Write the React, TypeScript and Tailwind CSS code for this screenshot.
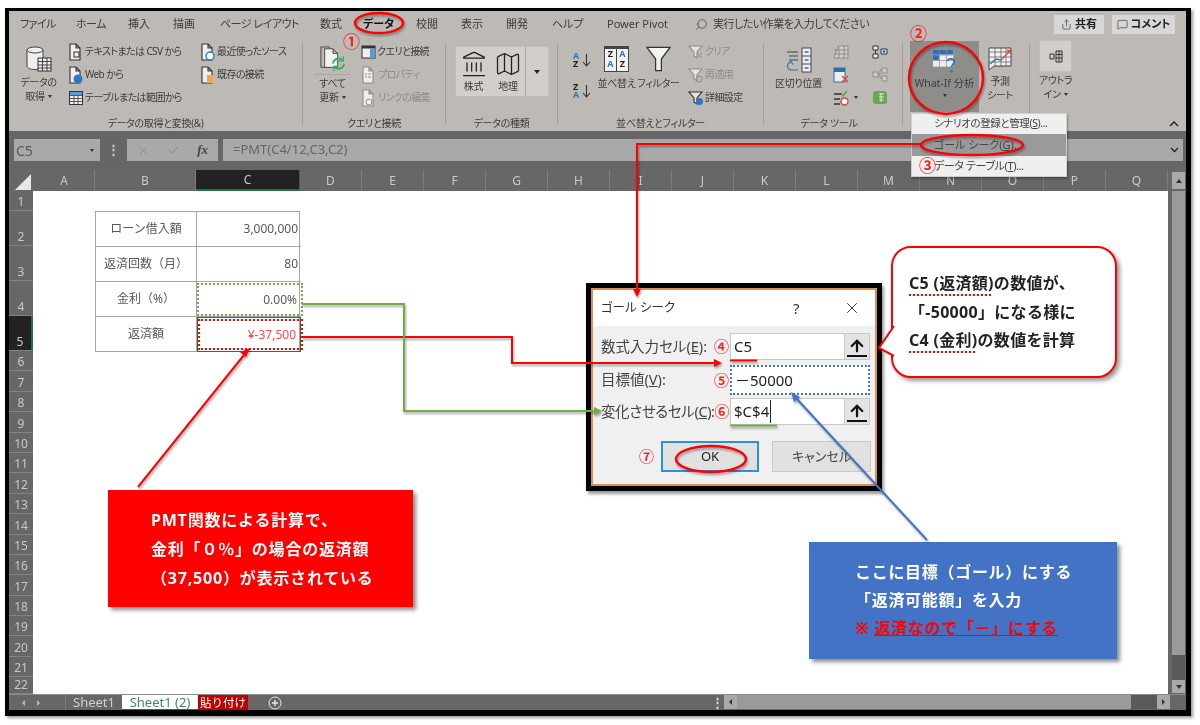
import type { ReactNode } from "react";
import { ArrowUp, Check, Landmark, Map as MapIcon, MessageSquare, Search, Share, X } from "lucide-react";

// small page shape shared by the data source icons
function Page({ children, muted }: { children?: ReactNode; muted?: boolean }) {
  const c = muted ? "#8f8c89" : "#333";
  return (
    <svg width="16" height="18" viewBox="0 0 16 18" className="shrink-0">
      <path d="M2 1h6l4 4v12H2z M8 1v4h4" fill="#efefef" stroke={c} strokeWidth="1.1" />
      {children}
    </svg>
  );
}

function TableGlyph({ size = 16 }: { size?: number }) {
  return (
    <svg width={size} height={size} viewBox="0 0 16 16" className="shrink-0">
      <rect x="1.5" y="1.5" width="13" height="13" fill="#efefef" stroke="#333" />
      <rect x="2" y="2" width="12" height="3" fill="#5b9bd5" />
      <path d="M1.5 5.5h13M1.5 8.5h13M1.5 11.5h13M6 5.5v9M10 5.5v9" stroke="#333" strokeWidth="0.8" />
    </svg>
  );
}

function DataIcon() {
  return (
    <svg width="28" height="27" viewBox="0 0 28 27">
      <path d="M2 4v16c0 2 3 3.500 8 3.500s8-1.500 8-3.500V4" fill="#efefef" stroke="#444" />
      <ellipse cx="10" cy="4" rx="8" ry="3" fill="#efefef" stroke="#444" />
      <rect x="13" y="12" width="13" height="13" fill="#efefef" stroke="#333" />
      <path d="M13 15.500h13M13 19h13M13 22h13M17.500 12v13M22 12v13" stroke="#333" strokeWidth="0.9" />
    </svg>
  );
}

function RefreshIcon() {
  return (
    <svg width="28" height="26" viewBox="0 0 30 28">
      <path d="M2 1h9v22H2z" fill="#bdb9b5" stroke="#444" />
      <path d="M6 3h9l5 5v15H6z M15 3v5h5" fill="#f2f2f2" stroke="#444" />
      <path d="M15 19a6 6 0 0 1 10-4M27 19a6 6 0 0 1-10 4" fill="none" stroke="#3fa95c" strokeWidth="1.8" />
      <path d="M26 11v5h-5M16 27v-5h5" fill="none" stroke="#3fa95c" strokeWidth="1.4" />
    </svg>
  );
}

function PaneIcon() {
  return (
    <svg width="15" height="14" viewBox="0 0 15 14" className="shrink-0">
      <rect x="1" y="1" width="13" height="12" fill="#efefef" stroke="#333" />
      <rect x="1" y="1" width="13" height="2.500" fill="#333" />
      <rect x="9" y="3.500" width="4.500" height="9" fill="#5b9bd5" />
    </svg>
  );
}

function FunnelGlyph({ color, children }: { color: string; children?: ReactNode }) {
  return (
    <svg width="16" height="16" viewBox="0 0 16 16" className="shrink-0">
      <path d="M1 2h13L9 8v6l-3-2V8z" fill="#e4e1de" stroke={color} strokeWidth="1.1" />
      {children}
    </svg>
  );
}

function SortLetters({ top, bottom }: { top: string; bottom: string }) {
  const topColor = top === "A" ? "text-[#2f77c4]" : "text-[#222]";
  const bottomColor = bottom === "A" ? "text-[#2f77c4]" : "text-[#222]";
  return (
    <div className="flex items-center h-[20px]">
      <div className="flex flex-col text-[9px] leading-[8px] font-bold w-[9px]">
        <span className={topColor}>{top}</span>
        <span className={bottomColor}>{bottom}</span>
      </div>
      <svg width="9" height="16" viewBox="0 0 9 16">
        <path d="M4.500 2v12M1 10l3.500 4 3.500-4" fill="none" stroke="#333" strokeWidth="1.1" />
      </svg>
    </div>
  );
}

function SortGrid() {
  return (
    <div className="w-[25px] h-[26px] border border-[#444] border-t-[3px] bg-[#f2f2f2] grid grid-cols-2 text-[9px] leading-[10px] font-bold text-center tracking-normal">
      <div className="border-r border-[#444] flex flex-col text-[#222]">
        <span>Z</span>
        <span className="text-[#2f77c4]">A</span>
      </div>
      <div className="flex flex-col text-[#2f77c4]">
        <span>A</span>
        <span className="text-[#222]">Z</span>
      </div>
    </div>
  );
}

function SplitIcon() {
  return (
    <svg width="26" height="26" viewBox="0 0 26 26">
      <path d="M1 5h11M3 9h9M3 13h9" stroke="#444" strokeWidth="1.2" />
      <rect x="16" y="1" width="9" height="24" fill="#efefef" stroke="#444" />
      <path d="M16 9h9M16 17h9" stroke="#444" />
      <path d="M18.500 5h4M18.500 13h4M18.500 21h4" stroke="#2f77c4" strokeWidth="1.6" />
      <path d="M12 23H6a4 4 0 0 1-1-8M2 17l3-2.500 2 3" fill="none" stroke="#2f77c4" strokeWidth="1.2" />
    </svg>
  );
}

function WhatIfIcon() {
  return (
    <svg width="28" height="26" viewBox="0 0 28 28">
      <rect x="1" y="1" width="22" height="18" fill="#eee" />
      <rect x="1" y="1" width="22" height="5" fill="#2f6fb5" />
      <rect x="1" y="6" width="6.500" height="6" fill="#2f6fb5" />
      <path d="M1 6.500h22M1 12.500h22M8 1v18M15.500 1v18" stroke="#8f8d8a" strokeWidth="0.8" />
      <path d="M17 13c0-3 7-3.500 7 .5 0 3-3 3-3 6.500" fill="none" stroke="#2f77c4" strokeWidth="2" />
      <circle cx="21" cy="24" r="1.500" fill="#2f77c4" />
    </svg>
  );
}

function ForecastIcon() {
  return (
    <svg width="24" height="24" viewBox="0 0 24 24">
      <path d="M1 1h22v18H6l-5 4z" fill="#f2f2f2" stroke="#444" />
      <path d="M1 5h22M1 10h22M1 15h22M7 1v18M13 1v18M18 1v18" stroke="#555" strokeWidth="0.7" />
      <path d="M2 17l6-5 5 1" fill="none" stroke="#2f77c4" strokeWidth="1.4" />
      <path d="M13 13l9-9M19 3.500h3.500V7" fill="none" stroke="#e0403a" strokeWidth="1.3" />
    </svg>
  );
}

function RibbonLabel({ children, muted }: { children: ReactNode; muted?: boolean }) {
  return <span className={muted ? "text-[#8f8c89] whitespace-nowrap tracking-[-0.6px]" : "whitespace-nowrap tracking-[-0.6px]"}>{children}</span>;
}

function SmallItem({ icon, text, muted }: { icon: ReactNode; text: string; muted?: boolean }) {
  return (
    <div className="h-[23px] flex items-center gap-[1px]">
      {icon}
      <RibbonLabel muted={muted}>{text}</RibbonLabel>
    </div>
  );
}

function GroupLabel({ children, className }: { children: ReactNode; className: string }) {
  return <div className={`h-[16px] pt-[1px] flex items-center justify-center ${className}`}>{children}</div>;
}

function Divider() {
  return <div className="w-px bg-[#a09c98] my-[6px] shrink-0" />;
}

function Caret({ className = "" }: { className?: string }) {
  return <span className={`inline-block w-0 h-0 border-x-[2.5px] border-x-transparent border-t-[3px] border-t-[#333] ${className}`} />;
}

function Ribbon() {
  return (
    <div className="h-[93px] flex bg-[#bdb9b5] text-[10px] tracking-[-0.3px] text-[#3d3d3d] [font-feature-settings:'palt']">
      {/* データの取得と変換 */}
      <div className="w-[293px] flex flex-col">
        <div className="h-[77px] flex pl-[11px] pt-[2px]">
          <div className="w-[37px] flex flex-col items-center pt-[6px]">
            <DataIcon />
            <div className="leading-[14px] mt-[2px] text-center whitespace-nowrap">データの</div>
            <div className="leading-[14px] flex items-center gap-[3px]">取得 <Caret /></div>
          </div>
          <div className="w-[132px] ml-[11px] flex flex-col">
            <SmallItem text="テキストまたは CSV から" icon={<Page><rect x="6" y="9" width="5" height="5" fill="none" stroke="#333" /></Page>} />
            <SmallItem text="Web から" icon={<Page><circle cx="10" cy="13" r="4.500" fill="#2f77c4" /></Page>} />
            <SmallItem text="テーブルまたは範囲から" icon={<TableGlyph />} />
          </div>
          <div className="flex flex-col">
            <SmallItem text="最近使ったソース" icon={<Page><circle cx="10" cy="13" r="4" fill="#fff" stroke="#2f77c4" strokeWidth="1.4" /></Page>} />
            <SmallItem text="既存の接続" icon={<Page><rect x="7" y="9" width="6" height="8" fill="#f2a649" /></Page>} />
          </div>
        </div>
        <GroupLabel className="">データの取得と変換(&amp;)</GroupLabel>
      </div>
      <Divider />
      {/* クエリと接続 */}
      <div className="w-[142px] flex flex-col">
        <div className="h-[77px] flex pl-[11px] pt-[2px]">
          <div className="w-[37px] flex flex-col items-center pt-[6px]">
            <RefreshIcon />
            <div className="w-full h-px bg-[#a9a5a1] mt-[2px]" />
            <div className="leading-[14px] mt-[1px]">すべて</div>
            <div className="leading-[14px] flex items-center gap-[3px] whitespace-nowrap">更新 <Caret /></div>
          </div>
          <div className="ml-[10px] flex flex-col">
            <SmallItem text="クエリと接続" icon={<PaneIcon />} />
            <SmallItem text="プロパティ" muted icon={<Page muted><path d="M4 8h2M4 11h2M7 8h3M7 11h3" stroke="#8f8c89" /></Page>} />
            <SmallItem text="リンクの編集" muted icon={<Page muted><circle cx="8" cy="13" r="3" fill="none" stroke="#8f8c89" /></Page>} />
          </div>
        </div>
        <GroupLabel className="">クエリと接続</GroupLabel>
      </div>
      <Divider />
      {/* データの種類 */}
      <div className="w-[111px] flex flex-col">
        <div className="h-[77px] pl-[9px] pt-[8px]">
          <div className="w-[94px] h-[51px] flex bg-[#d2ceca] border border-[#c2beba]">
            <div className="w-[69px] flex pt-[3px]">
              <div className="w-[35px] flex flex-col items-center">
                <Landmark size={28} strokeWidth={1.1} color="#222" />
                <span className="leading-[13px] mt-[2px]">株式</span>
              </div>
              <div className="w-[34px] flex flex-col items-center">
                <MapIcon size={28} strokeWidth={1.1} color="#222" />
                <span className="leading-[13px] mt-[2px]">地理</span>
              </div>
            </div>
            <div className="flex-1 border-l border-[#a9a5a1] flex items-center justify-center">
              <span className="w-0 h-0 border-x-[3.5px] border-x-transparent border-t-[4px] border-t-[#222]" />
            </div>
          </div>
        </div>
        <GroupLabel className="">データの種類</GroupLabel>
      </div>
      <Divider />
      {/* 並べ替えとフィルター */}
      <div className="w-[205px] flex flex-col">
        <div className="h-[77px] flex pl-[15px] pt-[2px]">
          <div className="w-[22px] flex flex-col pt-[10px] gap-[11px]">
            <SortLetters top="A" bottom="Z" />
            <SortLetters top="Z" bottom="A" />
          </div>
          <div className="w-[43px] flex flex-col items-center pt-[6px]">
            <SortGrid />
            <span className="leading-[14px] mt-[4px] whitespace-nowrap">並べ替え</span>
          </div>
          <div className="w-[43px] ml-[-1px] flex flex-col items-center pt-[6px]">
            <svg width="25" height="26" viewBox="0 0 26 26">
              <path d="M1 1h24L16 13v12h-6V13z" fill="#f2f2f2" stroke="#333" strokeWidth="1.3" />
            </svg>
            <span className="leading-[14px] mt-[4px] whitespace-nowrap">フィルター</span>
          </div>
          <div className="ml-[8px] flex flex-col">
            <SmallItem muted text="クリア" icon={<FunnelGlyph color="#8f8c89"><path d="M9 9l5 5M14 9l-5 5" stroke="#8f8c89" /></FunnelGlyph>} />
            <SmallItem muted text="再適用" icon={<FunnelGlyph color="#8f8c89"><circle cx="11" cy="12" r="3" fill="none" stroke="#8f8c89" /></FunnelGlyph>} />
            <SmallItem text="詳細設定" icon={<FunnelGlyph color="#333"><circle cx="11.500" cy="11.500" r="3.500" fill="#2f77c4" /></FunnelGlyph>} />
          </div>
        </div>
        <GroupLabel className="">並べ替えとフィルター</GroupLabel>
      </div>
      <Divider />
      {/* データ ツール */}
      <div className="w-[138px] flex flex-col">
        <div className="h-[77px] flex pl-[11px] pt-[2px]">
          <div className="w-[47px] flex flex-col items-center pt-[7px]">
            <SplitIcon />
            <span className="leading-[14px] mt-[3px] whitespace-nowrap">区切り位置</span>
          </div>
          <div className="ml-[11px] w-[39px] flex flex-col">
            <div className="h-[23px] flex items-center">
              <svg width="16" height="16" viewBox="0 0 16 16"><path d="M1 14L5 2h10v12z M1 10h14M1 6h14M6 2v12M11 2v12" fill="#cfcbc7" stroke="#8f8c89" /></svg>
            </div>
            <div className="h-[23px] flex items-center">
              <svg width="16" height="16" viewBox="0 0 16 16">
                <rect x="1" y="1" width="11" height="14" fill="#efefef" stroke="#2f6fb5" />
                <rect x="1" y="1" width="11" height="4" fill="#2f6fb5" />
                <path d="M9 9l6 6M15 9l-6 6" stroke="#e0403a" strokeWidth="1.4" />
              </svg>
            </div>
            <div className="h-[23px] flex items-center gap-[5px]">
              <svg width="16" height="16" viewBox="0 0 16 16">
                <path d="M1 4h8M1 9h6M1 14h6" stroke="#333" strokeWidth="1.5" />
                <path d="M8 4l2 2 4-5" fill="none" stroke="#3fa95c" strokeWidth="1.3" />
                <circle cx="11.500" cy="11.500" r="3.500" fill="#fff" stroke="#e0403a" strokeWidth="1.4" />
              </svg>
              <Caret />
            </div>
          </div>
          <div className="flex flex-col">
            <div className="h-[23px] flex items-center">
              <svg width="16" height="14" viewBox="0 0 16 14">
                <path d="M1 1h5v4H1zM1 9h5v4H1zM3.500 5v4M9 4h6v5H9z" fill="#efefef" stroke="#333" />
                <circle cx="12" cy="6.500" r="1.500" fill="#2f77c4" />
              </svg>
            </div>
            <div className="h-[23px] flex items-center">
              <svg width="16" height="15" viewBox="0 0 16 15"><path d="M1 5h5v5H1zM10 1h5v5h-5zM10 9h5v5h-5zM6 7h2V3h2M8 7v4h2" fill="#cfcbc7" stroke="#8f8c89" /></svg>
            </div>
            <div className="h-[23px] flex items-center">
              <svg width="16" height="15" viewBox="0 0 16 15">
                <rect x="1" y="1" width="14" height="13" rx="3" fill="#6aa84f" />
                <path d="M7 4h5M7 7h5M7 10h5M9 3v9" stroke="#d9ead3" />
              </svg>
            </div>
          </div>
        </div>
        <GroupLabel className="pr-[8px]">データ ツール</GroupLabel>
      </div>
      <Divider />
      {/* 予測 */}
      <div className="w-[126px] flex pl-[7px] pt-[3px]">
        <div className="w-[69px] h-[71px] bg-[#8f8d8a] flex flex-col items-center pt-[8px]">
          <WhatIfIcon />
          <span className="leading-[14px] mt-[1px] whitespace-nowrap text-[10.5px] tracking-normal">What-If 分析</span>
          <Caret className="mt-[4px]" />
        </div>
        <div className="w-[42px] flex flex-col items-center pt-[6px]">
          <ForecastIcon />
          <span className="leading-[14px] mt-[3px]">予測</span>
          <span className="leading-[14px]">シート</span>
        </div>
      </div>
      <Divider />
      {/* アウトライン */}
      <div className="w-[51px] flex flex-col items-center pt-[2px]">
        <div className="w-[33px] h-[32px] bg-[#d2ceca] border border-[#c2beba] flex items-center justify-center">
          <svg width="14" height="13" viewBox="0 0 14 13">
            <path d="M7 1h6v11H7zM7 4.500h6M7 8h6M10 1v11M1 4h4v5H1z" fill="none" stroke="#333" />
          </svg>
        </div>
        <span className="leading-[14px] mt-[1px] whitespace-nowrap">アウトラ</span>
        <span className="leading-[14px] flex items-center gap-[3px]">イン <Caret /></span>
      </div>
      <div className="flex-1 flex items-end justify-end pr-[7px] pb-[4px]">
        <svg width="10" height="7" viewBox="0 0 10 7"><path d="M1 6l4-4 4 4" fill="none" stroke="#222" strokeWidth="1.4" /></svg>
      </div>
    </div>
  );
}

const ribbonTabs = [
  { label: "ファイル", w: "w-[56px] tracking-[-0.6px]" },
  { label: "ホーム", w: "w-[52px] tracking-[-0.5px]" },
  { label: "挿入", w: "w-[45px]" },
  { label: "描画", w: "w-[47px]" },
  { label: "ページ レイアウト", w: "w-[100px] tracking-[-0.5px]" },
  { label: "数式", w: "w-[43px]" },
  { label: "データ", w: "w-[53px] font-bold text-[#111]" },
  { label: "校閲", w: "w-[45px]" },
  { label: "表示", w: "w-[45px]" },
  { label: "開発", w: "w-[46px]" },
  { label: "ヘルプ", w: "w-[55px]" },
  { label: "Power Pivot", w: "w-[88px]" },
];

function TabRow() {
  return (
    <div className="h-[27px] flex items-center pl-[11px] pr-[11px] bg-[#bdb9b5] text-[11px] text-[#3d3d3d] whitespace-nowrap [font-feature-settings:'palt']">
      {ribbonTabs.map((t) => (
        <div key={t.label} className={t.w}>{t.label}</div>
      ))}
      <Search size={13} strokeWidth={1.3} className="-scale-x-100" />
      <span className="ml-[5px] text-[11px] tracking-[-0.5px]">実行したい作業を入力してください</span>
      <div className="ml-auto flex gap-[8px]">
        <div className="w-[50px] h-[19px] bg-[#d7d7d7] flex items-center justify-center gap-[3px] text-[11px] font-bold text-[#222]">
          <Share size={11} strokeWidth={1.3} />共有
        </div>
        <div className="w-[63px] h-[19px] bg-[#d7d7d7] flex items-center justify-center gap-[3px] text-[11px] font-bold text-[#222]">
          <MessageSquare size={11} strokeWidth={1.3} />コメント
        </div>
      </div>
    </div>
  );
}

function FormulaBar() {
  return (
    <div className="h-[39px] flex items-start pt-[8px] pl-[5px] bg-[#666] text-[13px] text-[#595959]">
      <div className="w-[86px] h-[22px] bg-[#a9a9a9] flex items-center justify-between pl-[2px] pr-[6px]">
        <span className="text-[14px]">C5</span>
        <Caret />
      </div>
      <div className="w-[27px] text-center text-[#d0d0d0] font-bold leading-[20px]">⋮</div>
      <div className="w-[91px] h-[22px] bg-[#a9a9a9] flex items-center justify-between pl-[10px] pr-[10px]">
        <X size={13} strokeWidth={1.2} color="#808080" />
        <Check size={13} strokeWidth={1.6} color="#808080" />
        <span className="font-['Liberation_Serif',serif] italic font-bold text-[#444] text-[13px]">fx</span>
      </div>
      <div className="ml-[5px] w-[960px] h-[22px] bg-[#a9a9a9] flex items-center justify-between pl-[10px] pr-[4px]">
        <span className="text-[#666]">=PMT(C4/12,C3,C2)</span>
        <svg width="9" height="6" viewBox="0 0 9 6"><path d="M1 1l3.500 3.500L8 1" fill="none" stroke="#222" strokeWidth="1.3" /></svg>
      </div>
    </div>
  );
}

const columns = [
  { n: "A", w: "w-[61px]" },
  { n: "B", w: "w-[101px]" },
  { n: "C", w: "w-[104px] bg-[#222] border-b-2 border-[#217346]" },
  { n: "D", w: "w-[62px]" },
  { n: "E", w: "w-[62px]" },
  { n: "F", w: "w-[62px]" },
  { n: "G", w: "w-[62px]" },
  { n: "H", w: "w-[62px]" },
  { n: "I", w: "w-[62px]" },
  { n: "J", w: "w-[62px]" },
  { n: "K", w: "w-[62px]" },
  { n: "L", w: "w-[62px]" },
  { n: "M", w: "w-[62px]" },
  { n: "N", w: "w-[62px]" },
  { n: "O", w: "w-[62px]" },
  { n: "P", w: "w-[62px]" },
  { n: "Q", w: "w-[62px]" },
];

function ColumnHeader() {
  return (
    <div className="h-[21px] flex bg-[#676767] text-[12px] text-[#c9c9c9]">
      <div className="w-[25px] flex items-end justify-end pr-[3px] pb-[1px]">
        <svg width="16" height="16" viewBox="0 0 16 16"><path d="M16 0v16H0z" fill="#e8e8e8" /></svg>
      </div>
      {columns.map((c) => (
        <div key={c.n} className={`${c.w} flex items-center justify-center border-r border-[#7d7d7d]`}>{c.n}</div>
      ))}
      <div className="flex-1 pl-[4px] pt-[2px]">
        <div className="w-[13px] h-[17px] bg-[#a9a9a9] flex items-center justify-center">
          <span className="w-0 h-0 border-x-[3.5px] border-x-transparent border-b-[4px] border-b-[#333]" />
        </div>
      </div>
    </div>
  );
}

const rowNumbers = Array.from({ length: 22 }, (_, i) => i + 1);

function RowHeaders() {
  return (
    <div className="w-[24px] shrink-0 bg-[#676767] text-[12px] text-[#c9c9c9] flex flex-col overflow-hidden">
      {rowNumbers.map((n) => {
        let cls = "h-[20.4px] shrink-0";
        if (n === 1) cls = "h-[20px] shrink-0";
        if (n >= 2 && n <= 4) cls = "h-[35px] shrink-0";
        if (n === 5) cls = "h-[35px] shrink-0 bg-[#222] border-r-2 border-r-[#217346]";
        if (n === 22) cls = "h-[17px] shrink-0";
        return (
          <div key={n} className={`${cls} flex items-end justify-center border-b border-[#838383] leading-[16px]`}>{n}</div>
        );
      })}
    </div>
  );
}

function LoanTable() {
  const labelCell = "h-[35px] flex items-center justify-center border-r border-b border-[#a6a6a6]";
  const valueCell = "h-[35px] flex items-center justify-end pr-[3px] border-b border-[#a6a6a6]";
  return (
    <div className="ml-[62px] mt-[20px] w-[205px] grid grid-cols-[101px_104px] border-l border-t border-r border-[#a6a6a6] text-[12px] text-[#595959]">
      <div className={labelCell}>ローン借入額</div>
      <div className={valueCell}>3,000,000</div>
      <div className={labelCell}>返済回数（月）</div>
      <div className={valueCell}>80</div>
      <div className={labelCell}>金利（%）</div>
      <div className="h-[35px] border-b border-[#a6a6a6]">
        <div className="h-[33px] mt-[1px] mr-[-2px] flex items-center justify-end pr-[4px] border-2 border-dotted border-[#70ad47]">0.00%</div>
      </div>
      <div className={labelCell}>返済額</div>
      <div className="h-[35px] border border-[#217346]">
        <div className="h-[31px] mt-[1px] mr-[-3px] flex items-center justify-end pr-[5px] border-2 border-dotted border-[#ff0000] text-[#ff4b4b]">¥-37,500</div>
      </div>
    </div>
  );
}

function VerticalScroll() {
  return (
    <div className="flex-1 bg-[#676767] pl-[4px] flex flex-col">
      <div className="w-[13px] h-[464px] bg-[#9a9a9a]" />
      <div className="w-[13px] h-[25px] bg-[#595959]" />
      <div className="w-[13px] h-[13px] bg-[#a9a9a9] flex items-center justify-center">
        <span className="w-0 h-0 border-x-[3.5px] border-x-transparent border-t-[4px] border-t-[#333]" />
      </div>
    </div>
  );
}

function SheetTabs() {
  return (
    <div className="h-[16px] flex bg-[#676767] text-[13px] leading-[15px] border-t border-[#8a8a8a]">
      <div className="w-[57px] flex items-center pl-[13px] gap-[12px] border-r border-[#7d7d7d]">
        <span className="w-0 h-0 border-y-[3px] border-y-transparent border-r-[3px] border-r-[#bbb]" />
        <span className="w-0 h-0 border-y-[3px] border-y-transparent border-l-[3px] border-l-[#bbb]" />
      </div>
      <div className="w-[56px] text-center text-[#cfcfcf]">Sheet1</div>
      <div className="w-[76px] text-center text-[#3e8a63] bg-white border-b border-[#217346]">Sheet1 (2)</div>
      <div className="w-[50px] text-center text-white bg-[#c00000] text-[11.5px]">貼り付け</div>
      <div className="ml-[20px] w-[14px] flex items-center">
        <svg width="14" height="14" viewBox="0 0 14 14">
          <circle cx="7" cy="7" r="6" fill="none" stroke="#e8e8e8" />
          <path d="M4 7h6M7 4v6" stroke="#e8e8e8" strokeWidth="1.4" />
        </svg>
      </div>
      <div className="ml-[429px] w-[7px] text-center text-[#ddd] font-bold leading-[14px]">⋮</div>
      <div className="ml-[6px] w-[13px] h-[14px] bg-[#a9a9a9] flex items-center justify-center">
        <span className="w-0 h-0 border-y-[3px] border-y-transparent border-r-[3px] border-r-[#333]" />
      </div>
      <div className="w-[394px] h-[14px] bg-[#9a9a9a]" />
      <div className="w-[26px] h-[14px] bg-[#595959]" />
      <div className="w-[13px] h-[14px] bg-[#a9a9a9] flex items-center justify-center">
        <span className="w-0 h-0 border-y-[3px] border-y-transparent border-l-[3px] border-l-[#333]" />
      </div>
    </div>
  );
}

function Num({ children, className }: { children: ReactNode; className: string }) {
  return <span className={`text-[#ff1f1f] leading-none font-bold ${className}`}>{children}</span>;
}

function RefButton() {
  return (
    <div className="w-[25px] h-full bg-[#e4e4e4] border-l border-[#c8c8c8] flex items-center justify-center">
      <ArrowUp size={20} strokeWidth={3} color="#111" className="border-b-2 border-[#111]" />
    </div>
  );
}

function GoalSeekDialog() {
  return (
    <div className="absolute left-[586px] top-[283px] w-[296px] h-[208px] border-[5px] border-black bg-white shadow-[2px_3px_3px_rgba(0,0,0,0.4)] text-[14.5px] text-[#444] [font-feature-settings:'palt']">
      <div className="h-full border-2 border-[#d98f55] flex flex-col">
        <div className="h-[36px] flex items-center bg-white pl-[8px] text-[#333] text-[12.5px]">
          <span className="w-[192px]">ゴール シーク</span>
          <span className="w-[50px] text-[15px]">?</span>
          <X size={18} strokeWidth={1.3} />
        </div>
        <div className="flex-1 bg-[#f0f0f0] pt-[7px] flex flex-col">
          <div className="h-[27px] flex items-center pl-[8px]">
            <div className="w-[129px] flex items-center justify-between pr-[1px]">
              <span className="whitespace-nowrap">数式入力セル(<u>E</u>):</span>
              <Num className="text-[15px]">④</Num>
            </div>
            <div className="w-[140px] h-full bg-white border border-[#c8c8c8] flex items-center justify-between pl-[3px] text-[15px] text-[#222]">
              C5<RefButton />
            </div>
          </div>
          <div className="h-[30px] mt-[5px] flex items-center pl-[8px]">
            <div className="w-[129px] flex items-center justify-between pr-[1px]">
              <span>目標値(<u>V</u>):</span>
              <Num className="text-[15px]">⑤</Num>
            </div>
            <div className="w-[140px] h-full bg-white border-2 border-dotted border-[#4472c4] flex items-center pl-[3px] text-[15px] text-[#222]">
              －50000
            </div>
          </div>
          <div className="h-[27px] mt-[3px] flex items-center pl-[8px]">
            <div className="w-[129px] flex items-center justify-between pr-[1px]">
              <span className="whitespace-nowrap tracking-[-0.4px]">変化させるセル(<u>C</u>):</span>
              <Num className="text-[15px]">⑥</Num>
            </div>
            <div className="w-[140px] h-full bg-white border border-[#c8c8c8] flex items-center justify-between pl-[3px] text-[15px] text-[#222]">
              <span className="border-r border-[#222] pr-[1px]">$C$4</span>
              <RefButton />
            </div>
          </div>
          <div className="mt-[16px] flex items-center pl-[46px] text-[13px]">
            <Num className="w-[22px] text-[15px]">⑦</Num>
            <div className="w-[98px] h-[31px] border-2 border-[#2f8fd8] bg-[#e1e1e1] flex items-center justify-center text-[#222]">OK</div>
            <div className="ml-[13px] w-[99px] h-[31px] border border-[#c8c8c8] bg-[#e1e1e1] flex items-center justify-center">キャンセル</div>
          </div>
        </div>
      </div>
    </div>
  );
}

function Callout() {
  const mark = "underline decoration-dotted decoration-[#ff0000] decoration-2 underline-offset-[5px]";
  return (
    <div className="absolute left-[891px] top-[246px] w-[226px] h-[132px] bg-white border-2 border-[#ff0000] rounded-[20px] shadow-[3px_3px_4px_rgba(0,0,0,0.4)] pl-[16px] pt-[21px] text-[16px] tracking-[0.3px] leading-[28.5px] font-bold text-[#222]">
      <svg width="18" height="36" viewBox="0 0 18 36" className="absolute left-[-16px] top-[75px]">
        <polyline points="17,3 2,25 17,33" fill="#fff" stroke="#ff0000" strokeWidth="2" />
      </svg>
      <div className="whitespace-nowrap"><span className={mark}>C5 (返済額)</span>の数値が、</div>
      <div className="whitespace-nowrap">「-50000」になる様に</div>
      <div className="whitespace-nowrap"><span className={mark}>C4 (金利)</span>の数値を計算</div>
    </div>
  );
}

function Notes() {
  return (
    <>
      <div className="absolute left-[108px] top-[490px] w-[305px] h-[117px] bg-[#ff0000] shadow-[3px_3px_4px_rgba(0,0,0,0.45)] pl-[43px] pt-[16px] text-[16px] tracking-[0.8px] leading-[29px] font-bold text-white whitespace-nowrap">
        <div>PMT関数による計算で、</div>
        <div>金利「０％」の場合の返済額</div>
        <div>（37,500）が表示されている</div>
      </div>
      <div className="absolute left-[809px] top-[542px] w-[308px] h-[117px] bg-[#4472c4] shadow-[3px_3px_4px_rgba(0,0,0,0.45)] pl-[46px] pt-[16px] text-[16px] tracking-[0.7px] leading-[28px] font-bold text-white whitespace-nowrap">
        <div>ここに目標（ゴール）にする</div>
        <div>「返済可能額」を入力</div>
        <div className="text-[#ff0000]">※ <u>返済なので「－」にする</u></div>
      </div>
    </>
  );
}

function Connectors() {
  return (
    <svg width="1200" height="725" viewBox="0 0 1200 725" fill="none" className="absolute inset-0 pointer-events-none drop-shadow-[1px_2px_1px_rgba(0,0,0,0.35)]">
      <ellipse cx="379" cy="23" rx="24" ry="10" stroke="#ff0000" strokeWidth="2.4" />
      <ellipse cx="946" cy="78" rx="37" ry="36" stroke="#ff0000" strokeWidth="2.4" />
      <ellipse cx="972" cy="145" rx="51" ry="10" stroke="#ff0000" strokeWidth="2.4" />
      <ellipse cx="711" cy="459" rx="35" ry="13" stroke="#ff0000" strokeWidth="2.4" />
      <path d="M922 144H637V290" stroke="#ff0000" strokeWidth="2" />
      <path d="M637 297l-4-8h8z" fill="#ff0000" />
      <path d="M301 337H512V363H714" stroke="#ff0000" strokeWidth="2" />
      <path d="M722 363l-8-4v8z" fill="#ff0000" />
      <path d="M302 304H404V411H594" stroke="#70ad47" strokeWidth="2" />
      <path d="M602 411l-8-4v8z" fill="#70ad47" />
      <path d="M138 487L244 355" stroke="#ff0000" strokeWidth="2" />
      <path d="M250 348l-10 4 6 5z" fill="#ff0000" />
      <path d="M927 540L796 398" stroke="#4472c4" strokeWidth="2" />
      <path d="M791 392l3 10 6-5z" fill="#4472c4" />
      <path d="M730 360.500h27" stroke="#ff0000" strokeWidth="2" />
      <path d="M730 425.500h47" stroke="#70ad47" strokeWidth="2" />
    </svg>
  );
}

export default function App() {
  return (
    <div className="relative w-[1200px] h-[725px] overflow-hidden bg-white font-['Noto_Sans','Noto_Sans_CJK_JP',sans-serif] blur-[0.5px]">
      <div className="pl-[5px] pt-[8px]">
        <div className="w-[1186px] h-[708px] border-l-4 border-t-[3px] border-r-[5px] border-b-[6px] border-black shadow-[2px_2px_3px_rgba(0,0,0,0.4)] flex flex-col overflow-hidden">
          <TabRow />
          <Ribbon />
          <FormulaBar />
          <ColumnHeader />
          <div className="h-[503px] flex">
            <RowHeaders />
            <div className="w-[1135px] bg-white">
              <LoanTable />
            </div>
            <VerticalScroll />
          </div>
          <SheetTabs />
        </div>
      </div>
      {/* What-If menu */}
      <div className="absolute left-[911px] top-[113px] w-[156px] h-[64px] bg-[#efefef] border border-[#cfcfcf] shadow-[1px_2px_2px_rgba(0,0,0,0.3)] text-[11px] text-[#444] flex flex-col [font-feature-settings:'palt']">
        <div className="h-[21px] flex items-center pl-[22px] whitespace-nowrap text-[10.5px] tracking-[-0.4px]">シナリオの登録と管理(<u>S</u>)...</div>
        <div className="h-[22px] flex items-center pl-[22px] bg-[#9a9a9a] whitespace-nowrap">ゴール シーク(<u>G</u>)...</div>
        <div className="h-[21px] flex items-center pl-[22px] whitespace-nowrap tracking-[-0.4px]">データ テーブル(<u>T</u>)...</div>
      </div>
      <GoalSeekDialog />
      <Callout />
      <Notes />
      <Connectors />
      <Num className="absolute left-[343px] top-[33px] text-[17px]">①</Num>
      <Num className="absolute left-[910px] top-[25px] text-[17px]">②</Num>
      <Num className="absolute left-[919px] top-[157px] text-[17px]">③</Num>
    </div>
  );
}
